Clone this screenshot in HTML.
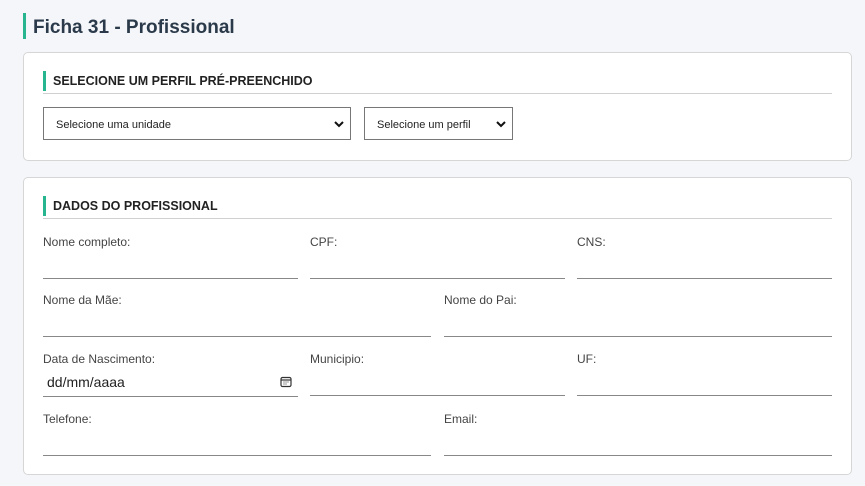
<!DOCTYPE html>
<html><head><meta charset="utf-8"><style>
*{box-sizing:border-box;margin:0;padding:0}
body{width:865px;height:486px;background:#f5f6f9;font-family:"Liberation Sans",sans-serif;position:relative;overflow:hidden;color:#333}
.a{position:absolute}
.title{left:23px;top:13px;height:26px;border-left:3px solid #27b58f;padding-left:7px;font-size:19px;font-weight:bold;color:#2b3a4a;line-height:30px}
.card{left:23px;width:829px;background:#fff;border:1px solid #d6d6d6;border-radius:5px}
.hdr{left:43px;width:789px;height:23px;border-bottom:1px solid #d0d0d0}
.hdr span{position:absolute;left:0;top:0;height:20px;border-left:3px solid #27b58f;padding-left:7px;font-size:12.5px;font-weight:bold;color:#222;line-height:21px}
.sel{height:33px;border:1px solid #777;background:#fff;font-size:11px;color:#222;line-height:35px;padding-left:12px}
.sel svg{position:absolute;right:6px;top:12px}
.lbl{font-size:12px;color:#444}
.ln{height:1px;background:#888}
</style></head><body>
<div class="a title">Ficha 31 - Profissional</div>
<div class="a card" style="top:52px;height:109px"></div>
<div class="a hdr" style="top:71px"><span>SELECIONE UM PERFIL PRÉ-PREENCHIDO</span></div>
<div class="a sel" style="left:43px;top:107px;width:308px">Selecione uma unidade<svg width="10" height="8" viewBox="0 0 10 8"><path d="M1 2l4 4 4-4" stroke="#111" stroke-width="2" fill="none"/></svg></div>
<div class="a sel" style="left:364px;top:107px;width:149px">Selecione um perfil<svg width="10" height="8" viewBox="0 0 10 8"><path d="M1 2l4 4 4-4" stroke="#111" stroke-width="2" fill="none"/></svg></div>

<div class="a card" style="top:177px;height:298px"></div>
<div class="a hdr" style="top:196px"><span>DADOS DO PROFISSIONAL</span></div>

<div class="a lbl" style="left:43px;top:235px">Nome completo:</div>
<div class="a lbl" style="left:310px;top:235px">CPF:</div>
<div class="a lbl" style="left:577px;top:235px">CNS:</div>
<div class="a ln" style="left:43px;top:278px;width:255px"></div>
<div class="a ln" style="left:310px;top:278px;width:255px"></div>
<div class="a ln" style="left:577px;top:278px;width:255px"></div>

<div class="a lbl" style="left:43px;top:293px">Nome da Mãe:</div>
<div class="a lbl" style="left:444px;top:293px">Nome do Pai:</div>
<div class="a ln" style="left:43px;top:336px;width:388px"></div>
<div class="a ln" style="left:444px;top:336px;width:388px"></div>

<div class="a lbl" style="left:43px;top:352px">Data de Nascimento:</div>
<div class="a lbl" style="left:310px;top:352px">Municipio:</div>
<div class="a lbl" style="left:577px;top:352px">UF:</div>
<div class="a" style="left:47px;top:374px;font-size:14px;color:#222">dd/mm/aaaa</div>
<svg class="a" style="left:280px;top:376px" width="12" height="12" viewBox="0 0 12 12"><rect x="1" y="1.5" width="10" height="9" rx="1.5" fill="none" stroke="#333" stroke-width="1.2"/><path d="M1 4h10" stroke="#333" stroke-width="1.2"/><path d="M3.5 6h1M5.5 6h1M7.5 6h1M3.5 8h1M5.5 8h1" stroke="#333"/></svg>
<div class="a ln" style="left:43px;top:396px;width:255px"></div>
<div class="a ln" style="left:310px;top:395px;width:255px"></div>
<div class="a ln" style="left:577px;top:395px;width:255px"></div>

<div class="a lbl" style="left:43px;top:412px">Telefone:</div>
<div class="a lbl" style="left:444px;top:412px">Email:</div>
<div class="a ln" style="left:43px;top:455px;width:388px"></div>
<div class="a ln" style="left:444px;top:455px;width:388px"></div>
</body></html>
